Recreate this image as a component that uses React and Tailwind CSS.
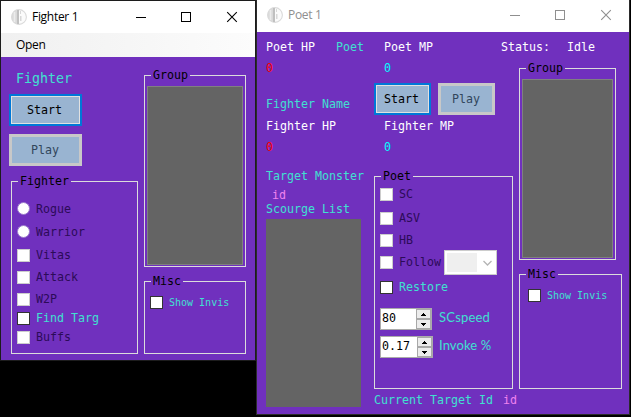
import React from "react";

function Label({ className = "", children }) {
  return (
    <div className={`h-[15px] shrink-0 whitespace-pre leading-[15px] ${className}`}>{children}</div>
  );
}

function GroupBox({ title, className = "", children }) {
  return (
    <fieldset className={`m-0 min-w-0 shrink-0 border border-[#dcdcdc] p-0 ${className}`}>
      <legend className="ml-[6px] h-[15px] pl-[2px] pr-[2px] leading-[15px] text-black">{title}</legend>
      {children}
    </fieldset>
  );
}

function Check({ label, enabled = false, className = "", textClass = "" }) {
  return (
    <label className={`flex h-[13px] shrink-0 items-center gap-[6px] ${className}`}>
      <span
        className={`size-[13px] shrink-0 border bg-white ${enabled ? "border-[#333333]" : "border-[#cccccc]"}`}
      />
      <span
        className={`whitespace-pre leading-[15px] ${enabled ? "text-[#40e0d0]" : "text-[#2c0b58]"} ${textClass}`}
      >
        {label}
      </span>
    </label>
  );
}

function Radio({ label, className = "" }) {
  return (
    <label className={`flex h-[13px] shrink-0 items-center gap-[6px] ${className}`}>
      <span className="size-[13px] shrink-0 rounded-full border border-[#9a78cc] bg-white" />
      <span className="pt-px leading-[15px] text-[#2c0b58]">{label}</span>
    </label>
  );
}

function StartButton({ className = "" }) {
  return (
    <button className={`h-8 border-2 border-[#0078d7] ${className}`}>
      <span className="flex h-full items-center justify-center border border-[#e1e1e1] bg-[#99b4d1] pr-[2px] pt-[2px] text-black">
        Start
      </span>
    </button>
  );
}

function PlayButton({ className = "" }) {
  return (
    <button
      className={`flex h-8 items-center justify-center border-3 border-[#c8c8c8] bg-[#99b4d1] pr-px pt-[2px] text-[#31465c] ${className}`}
    >
      Play
    </button>
  );
}

function Emblem() {
  return (
    <svg width="16" height="16" viewBox="0 0 16 16">
      <circle cx="8" cy="8" r="7.4" fill="#fbfbfb" stroke="#dadada" strokeWidth="1.1" />
      <path d="M7 .6C2.500 1 .6 4.500 .6 8s2 7 6.400 7.400z" fill="#dadada" />
      <path d="M3.500 3v10" stroke="#ececec" strokeWidth="1.500" />
      <path d="M6 1h2v14H6z" fill="#c0c0c0" />
      <path d="M9 2h1v3H9zM9 7h1.500v5H9z" fill="#d8d8d8" />
    </svg>
  );
}

function TitleBar({ title, className = "" }) {
  return (
    <div className={`flex shrink-0 items-center bg-white pl-[10px] ${className}`}>
      <Emblem />
      <span className="ml-[5px] flex-1 whitespace-nowrap font-['Open_Sans','Noto_Sans',sans-serif] text-[12px] tracking-[-0.3px]">
        {title}
      </span>
      <svg width="102" height="12" viewBox="0 0 102 12" fill="none" stroke="currentColor" shapeRendering="crispEdges">
        <path d="M0 6.500h10" />
        <path d="M45.500 1.500h9v9h-9z" />
        <path d="M91.200 1.200l9.600 9.600M100.800 1.200l-9.600 9.600" shapeRendering="auto" strokeWidth="1.100" />
      </svg>
    </div>
  );
}

function Spinner({ value, className = "" }) {
  return (
    <div className={`flex h-[22px] border border-[#ababab] bg-white ${className}`}>
      <span className="flex-1 pl-px leading-[18px] text-black">{value}</span>
      <span className="flex w-[15px] flex-col">
        <span className="flex flex-1 items-center justify-center border border-[#a8a8a8] bg-[#ececec]">
          <svg width="5" height="3" viewBox="0 0 5 3" shapeRendering="crispEdges">
            <path d="M2 0h1v1H2zM1 1h3v1H1zM0 2h5v1H0z" />
          </svg>
        </span>
        <span className="flex flex-1 items-center justify-center border border-[#a8a8a8] bg-[#ececec]">
          <svg width="5" height="3" viewBox="0 0 5 3" shapeRendering="crispEdges">
            <path d="M0 0h5v1H0zM1 1h3v1H1zM2 2h1v1H2z" />
          </svg>
        </span>
      </span>
    </div>
  );
}

function FighterWindow() {
  return (
    <div className="absolute left-0 top-0 flex h-[361px] w-[256px] flex-col border border-[#1c1c1c] bg-[#7030be]">
      <TitleBar title="Fighter 1" className="h-8 pr-[17px] text-black" />
      <div className="h-6 shrink-0 bg-gradient-to-r from-[#f0f0f0] to-[#fcfcfc] pl-[15px] font-['Open_Sans','Noto_Sans',sans-serif] text-[12px] leading-[24px] tracking-[-0.3px] text-black">
        Open
      </div>
      <div className="flex flex-1">
        <div className="flex w-[143px] shrink-0 flex-col pl-2">
          <Label className="ml-[7px] mt-[14px] text-[13.3px] text-[#40e0d0]">Fighter</Label>
          <StartButton className="mt-2 w-[73px]" />
          <PlayButton className="mt-2 w-[73px]" />
          <GroupBox title="Fighter" className="ml-[2px] mt-2 h-[180px] w-[127px]">
            <div className="flex flex-col pl-[5px] pt-[12px]">
              <Radio label="Rogue" className="mt-px" />
              <Radio label="Warrior" className="mt-[10px]" />
              <Check label="Vitas" className="mt-[11px]" />
              <Check label="Attack" className="mt-[9px]" />
              <Check label="W2P" className="mt-[9px]" />
              <Check label="Find Targ" enabled className="mt-[6px]" />
              <Check label="Buffs" className="mt-[6px]" />
            </div>
          </GroupBox>
        </div>
        <div className="flex w-[102px] flex-col">
          <GroupBox title="Group" className="mt-[11px] h-[199px]">
            <div className="ml-[2px] mt-[3px] h-[179px] w-[96px] border border-[#808080] bg-[#646464]" />
          </GroupBox>
          <GroupBox title="Misc" className="mt-[7px] h-[80px]">
            <Check label="Show Invis" enabled className="ml-[5px] mt-[7px]" textClass="text-[10px]" />
          </GroupBox>
        </div>
      </div>
    </div>
  );
}

function PoetWindow() {
  return (
    <div className="absolute left-[256px] top-0 flex h-[415px] w-[374px] flex-col border-x border-b border-[#2b2b2b] bg-[#7030be] text-white">
      <TitleBar title="Poet 1" className="h-8 pb-[2px] pr-[17px] text-[#8f8f8f]" />
      <div className="mt-2 flex shrink-0 pl-[9px]">
        <Label className="w-[70px]">Poet HP</Label>
        <Label className="w-[48px] text-[#40e0d0]">Poet</Label>
        <Label className="w-[117px]">Poet MP</Label>
        <Label className="w-[66px]">Status:</Label>
        <Label>Idle</Label>
      </div>
      <div className="flex flex-1 pl-[9px]">
        <div className="flex w-[108px] shrink-0 flex-col text-[#40e0d0]">
          <Label className="mt-[6px] text-[#ff0000]">0</Label>
          <Label className="mt-[21px]">Fighter Name</Label>
          <Label className="mt-[7px] text-white">Fighter HP</Label>
          <Label className="mt-[6px] text-[#ff0000]">0</Label>
          <Label className="mt-[14px]">Target Monster</Label>
          <Label className="ml-[6px] mt-[4px] text-[#ee82ee]">id</Label>
          <Label className="-mt-px">Scourge List</Label>
          <div className="mt-[2px] h-[188px] w-[95px] bg-[#646464]" />
        </div>
        <div className="flex w-[145px] shrink-0 flex-col">
          <Label className="ml-[10px] mt-[6px] text-[#00ffff]">0</Label>
          <div className="mt-[7px] flex gap-[7px]">
            <StartButton className="w-[57px]" />
            <PlayButton className="w-[57px]" />
          </div>
          <Label className="ml-[10px] mt-[4px]">Fighter MP</Label>
          <Label className="ml-[10px] mt-[6px] text-[#00ffff]">0</Label>
          <GroupBox title="Poet" className="mt-[14px] h-[220px] w-[139px]">
            <div className="flex flex-col pl-[5px] pt-[4px]">
              <Check label="SC" />
              <Check label="ASV" className="mt-[11px]" />
              <Check label="HB" className="mt-[9px]" />
              <div className="mt-[3px] flex h-[25px] items-center">
                <Check label="Follow" className="w-[64px]" />
                <div className="flex h-[25px] w-[53px] items-center border border-[#cccccc] bg-white pl-[2px]">
                  <span className="h-[19px] w-[30px] bg-[#efefef]" />
                  <svg className="ml-[6px]" width="9" height="6" viewBox="0 0 9 6" fill="none" stroke="#b4b4b4" strokeWidth="1.300">
                    <path d="M.5 1l4 4l4-4" />
                  </svg>
                </div>
              </div>
              <Check label="Restore" enabled className="mt-[6px]" />
              <div className="mt-[14px] flex gap-[7px]">
                <Spinner value="80" className="w-[52px]" />
                <span className="whitespace-nowrap font-['Lato',sans-serif] text-[13px] leading-[18px] tracking-[0.200px] text-[#40e0d0]">
                  SCspeed
                </span>
              </div>
              <div className="mt-[6px] flex gap-[6px]">
                <Spinner value="0.17" className="w-[53px]" />
                <span className="whitespace-nowrap font-['Lato',sans-serif] text-[13px] leading-[18px] tracking-[0.100px] text-[#40e0d0]">
                  Invoke %
                </span>
              </div>
            </div>
          </GroupBox>
          <div className="mt-[4px] flex">
            <Label className="w-[129px] text-[#40e0d0]">Current Target Id</Label>
            <Label className="text-[#ee82ee]">id</Label>
          </div>
        </div>
        <div className="flex w-[103px] shrink-0 flex-col">
          <GroupBox title="Group" className="mt-[6px] h-[199px] w-[97px]">
            <div className="ml-[2px] mt-[3px] h-[179px] w-[91px] border border-[#808080] bg-[#646464]" />
          </GroupBox>
          <GroupBox title="Misc" className="mt-[7px] h-[122px]">
            <Check label="Show Invis" enabled className="ml-[8px] mt-[7px]" textClass="text-[10px]" />
          </GroupBox>
        </div>
      </div>
    </div>
  );
}

export default function App() {
  return (
    <div className="relative h-[417px] w-[631px] overflow-hidden bg-black font-['DejaVu_Sans_Mono',monospace] text-[11.63px]">
      <FighterWindow />
      <PoetWindow />
    </div>
  );
}
